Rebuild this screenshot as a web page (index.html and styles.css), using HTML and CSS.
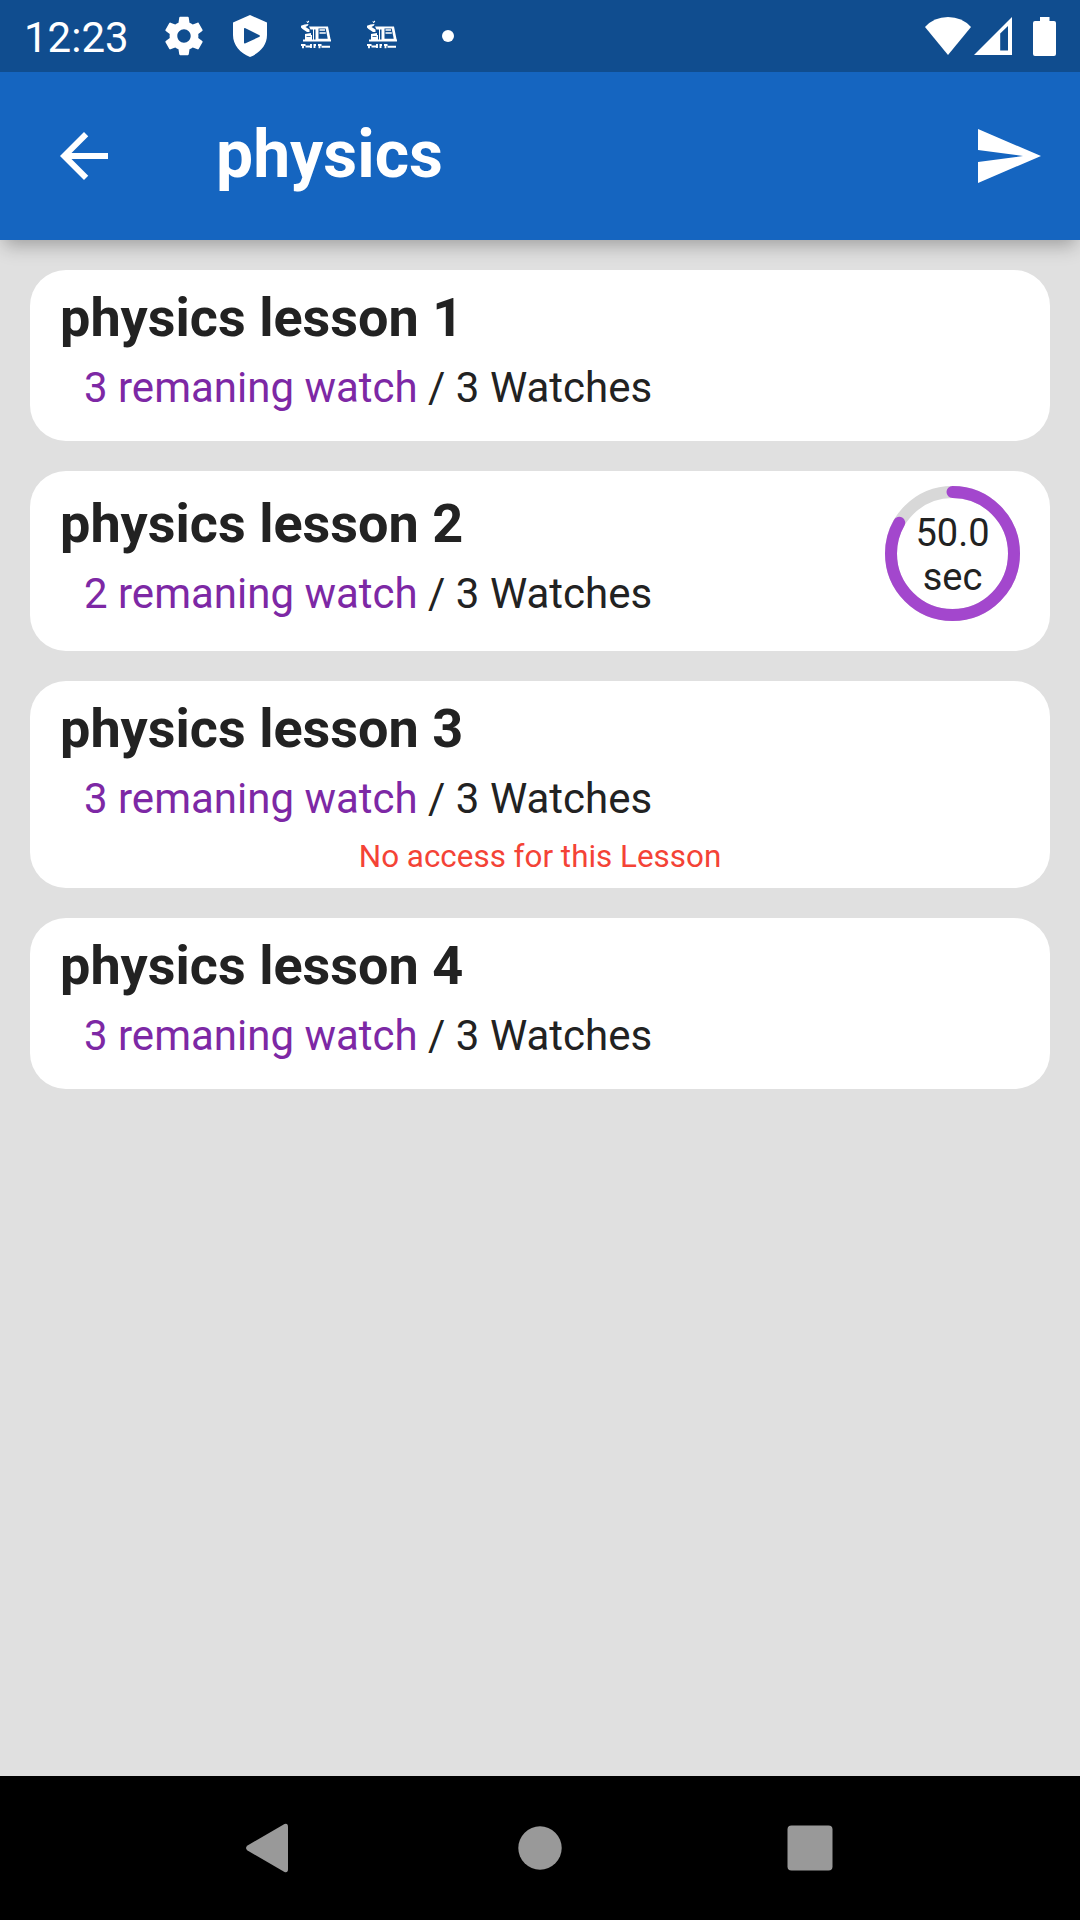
FILE: index.html
```html
<!DOCTYPE html>
<html lang="en">
<head>
<meta charset="utf-8">
<title>physics</title>
<link rel="stylesheet" href="styles.css">
</head>
<body>
<svg class="defs" aria-hidden="true">
  <symbol id="book" viewBox="0 0 30 30">
    <path d="M5 .8l1.200 1L7.800.5l.4 1.200-1.700 1.500zM0 5.800L3.500 4.500l4-.5-.5 1.500-2.500 1.500L8.500 9.500 8.500 12H6L1.500 9 0 7.500zM8 6.500h19L29.700 20H14.500V9.500H9.500zM4 14l6-1v2H4zM4 15h7v5H4zM2 19.500h28v2H2z" fill="#fff"/>
    <path d="M17.500 8.500h7.200l2 10.300h-9.200z" fill="#104d8f"/>
    <path d="M18.500 10h5.500M18.500 13h6.300" stroke="#fff" stroke-width="1.500"/>
    <path d="M5.500 16.500h4" stroke="#104d8f" stroke-width=".8"/>
    <path d="M12.500 9v11" stroke="#fff" stroke-width="1"/>
    <path d="M0 25h4.500M2 24.500v3.800M4.500 26.500h6M10 24v4M12.500 25h2.500M13.500 24v4M17 25h3.500M18.500 24.500v3.800M20.500 26.700H29" stroke="#fff" stroke-width="1.900"/>
  </symbol>
</svg>
<div class="screen">
  <header class="status">
    <span class="clock">12:23</span>
    <svg class="gear" viewBox="0 0 24 24"><path d="M19.430 12.980c.04-.32.07-.64.07-.98s-.03-.66-.07-.98l2.110-1.650c.19-.15.24-.42.12-.64l-2-3.460c-.12-.22-.39-.3-.61-.22l-2.490 1c-.52-.4-1.080-.73-1.690-.98l-.38-2.650C14.460 2.180 14.250 2 14 2h-4c-.25 0-.46.18-.49.42l-.38 2.650c-.61.25-1.170.59-1.690.98l-2.490-1c-.23-.09-.49 0-.61.22l-2 3.460c-.13.22-.07.49.12.64l2.110 1.650c-.04.32-.07.65-.07.98s.03.66.07.98l-2.110 1.650c-.19.15-.24.42-.12.64l2 3.460c.12.22.39.3.61.22l2.490-1c.52.4 1.080.73 1.690.98l.38 2.650c.03.24.24.42.49.42h4c.25 0 .46-.18.49-.42l.38-2.650c.61-.25 1.170-.59 1.690-.98l2.490 1c.23.09.49 0 .61-.22l2-3.460c.12-.22.07-.49-.12-.64zM12 15.500c-1.930 0-3.500-1.570-3.500-3.500s1.570-3.500 3.500-3.500 3.500 1.570 3.500 3.500-1.570 3.500-3.500 3.500z"/></svg>
    <svg class="shield" viewBox="0 0 34 42"><path fill-rule="evenodd" d="M17 0L34 7.500V20C34 30 27 38 17 42 7 38 0 30 0 20V7.500zM11 14v13.500q0 1.500 1.500.8L26 22q2-1 0-2L12.500 13.200Q11 12.500 11 14z"/></svg>
    <svg class="book"><use href="#book"/></svg>
    <svg class="book"><use href="#book"/></svg>
    <span class="dot"></span>
    <div class="signals">
      <svg class="wifi" viewBox="0 0 46 38"><path d="M0 10Q9 0 23 0T46 10L23 38z"/></svg>
      <svg class="cell" viewBox="0 0 38 38"><path fill-rule="evenodd" d="M38 0V38H0zM26.200 16.500V33.500H34V9z"/></svg>
      <svg class="battery" viewBox="0 0 23 39"><path d="M7 0h9.500v4H21q2 0 2 2v31q0 2-2 2H2q-2 0-2-2V6q0-2 2-2h5z"/></svg>
    </div>
  </header>
  <nav class="appbar">
    <svg class="icon" viewBox="0 0 24 24"><path d="M20 11H7.830l5.590-5.590L12 4l-8 8 8 8 1.410-1.410L7.830 13H20v-2z"/></svg>
    <h1 class="heading">physics</h1>
    <svg class="icon" viewBox="0 0 24 24"><path d="M2.010 21L23 12 2.010 3 2 10l15 2-15 2z"/></svg>
  </nav>
  <main class="lessons">
    <article class="card">
      <h2 class="title">physics lesson 1</h2>
      <p class="watches"><span class="left">3 remaning watch</span> / 3 Watches</p>
    </article>
    <article class="card timed">
      <div>
        <h2 class="title">physics lesson 2</h2>
        <p class="watches"><span class="left">2 remaning watch</span> / 3 Watches</p>
      </div>
      <div class="timer">
        <svg class="ring" viewBox="0 0 135 135">
          <circle class="track" cx="67.500" cy="67.500" r="61.500"/>
          <circle class="progress" cx="67.500" cy="67.500" r="61.500" pathLength="60" transform="rotate(-90 67.500 67.500)"/>
        </svg>
        <span class="seconds">50.0<br>sec</span>
      </div>
    </article>
    <article class="card">
      <h2 class="title">physics lesson 3</h2>
      <p class="watches"><span class="left">3 remaning watch</span> / 3 Watches</p>
      <p class="denied">No access for this Lesson</p>
    </article>
    <article class="card">
      <h2 class="title">physics lesson 4</h2>
      <p class="watches"><span class="left">3 remaning watch</span> / 3 Watches</p>
    </article>
  </main>
  <footer class="navbar">
    <svg class="key" viewBox="0 0 48 48"><path d="M38.500 0Q42 -1 42 3V45Q42 49 38.500 48L1.500 26.500Q-1.500 24 1.500 21.500z"/></svg>
    <svg class="key" viewBox="0 0 48 48"><circle cx="24" cy="24" r="21.700"/></svg>
    <svg class="key" viewBox="0 0 48 48"><rect x="1.500" y="1.500" width="45" height="45" rx="4"/></svg>
  </footer>
</div>
</body>
</html>
```

FILE: styles.css
```css
* { box-sizing: border-box; margin: 0; padding: 0; }
body { font-family: Roboto, sans-serif; color: #222; }
svg { display: block; flex: none; fill: #fff; overflow: visible; }
.defs { display: none; }
.screen { width: 1080px; height: 1920px; display: flex; flex-direction: column; background: #e0e0e0; }
.status { height: 72px; flex: none; z-index: 2; display: flex; align-items: center; background: #104d8f; color: #fff; padding: 0 24px; }
.clock { font-size: 42px; line-height: 50px; width: 137px; padding-top: 3px; }
.gear { width: 46px; height: 46px; }
.shield { width: 34px; height: 42px; margin-left: 26px; }
.book { width: 30px; height: 30px; margin: 0 0 2px 34px; }
.book + .book { margin-left: 36px; }
.dot { width: 12px; height: 12px; border-radius: 50%; background: #fff; margin-left: 45px; }
.signals { display: flex; align-items: center; margin-left: auto; }
.wifi { width: 46px; height: 38px; }
.cell { width: 38px; height: 38px; margin-left: 3px; }
.battery { width: 23px; height: 39px; margin-left: 21px; }
.appbar {
  height: 168px; flex: none; z-index: 1; display: flex; align-items: center; padding: 0 36px 0 48px;
  background: #1565c0;
  box-shadow: 0 9px 18px -4px rgba(0,0,0,.3);
}
.icon { width: 72px; height: 72px; }
.heading { flex: 1; padding: 0 0 2px 96px; color: #fff; font-size: 66px; font-weight: 700; line-height: 78px; }
.lessons { flex: 1; display: flex; flex-direction: column; gap: 30px; padding: 30px; }
.card { background: #fff; border-radius: 36px; padding: 16px 30px 13px; min-height: 171px; }
.timed { display: flex; justify-content: space-between; height: 180px; padding-top: 15px; }
.timed > div:first-child { padding-top: 6px; }
.title { font-size: 54px; font-weight: 700; line-height: 64px; }
.watches { font-size: 42px; line-height: 50px; margin: 13px 0 0 24px; }
.left { color: #7d28a5; }
.denied { font-size: 31.400px; line-height: 36px; text-align: center; color: #f44336; margin-top: 15px; }
.timer { width: 135px; height: 135px; display: grid; place-items: center; }
.timer > * { grid-area: 1 / 1; }
.ring { width: 135px; height: 135px; fill: none; }
.ring circle { fill: none; stroke-width: 12; }
.track { stroke: #d8d8d8; }
.progress { stroke: #a347cd; stroke-linecap: round; stroke-dasharray: 50 60; }
.seconds { font-size: 38px; line-height: 44px; text-align: center; padding-top: 2px; }
.navbar { height: 144px; flex: none; display: flex; justify-content: center; gap: 222px; align-items: center; background: #000; }
.key { width: 48px; height: 48px; fill: #999; }
```
